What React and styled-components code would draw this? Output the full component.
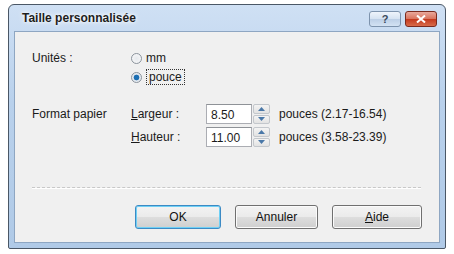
import React from "react";
import styled, { createGlobalStyle } from "styled-components";

const Global = createGlobalStyle`
  html, body { margin: 0; padding: 0; background: #ffffff; }
  body { font-family: "Liberation Sans", Arial, sans-serif; }
`;

const Window = styled.div`
  margin: 4px 0 0 8px;
  width: 438px;
  height: 245px;
  box-sizing: border-box;
  border: 1px solid #4a5766;
  border-radius: 6px 6px 2px 2px;
  background: linear-gradient(180deg, #cfe0f4 0%, #b9d1ec 40%, #b0cae7 100%);
  display: flex;
  flex-direction: column;
  padding: 0 5px 5px 5px;
`;

const TitleBar = styled.div`
  height: 26px;
  display: flex;
  align-items: center;
  justify-content: space-between;
  padding: 0 3px 0 8px;
`;

const Title = styled.div`
  font-size: 12px;
  font-weight: bold;
  color: #1e1e1e;
  text-shadow: 0 0 6px #ffffff, 0 0 3px #ffffff;
`;

const Caption = styled.div`
  display: flex;
  gap: 4px;
  margin-top: 2px;
`;

const CapButton = styled.div`
  width: 32px;
  height: 16px;
  box-sizing: border-box;
  border: 1px solid ${(p) => (p.$close ? "#7a2a1e" : "#7d93ad")};
  border-radius: 3px;
  background: ${(p) =>
    p.$close
      ? "linear-gradient(180deg, #e9a99c 0%, #d9755f 48%, #c43a1e 52%, #d86b4a 100%)"
      : "linear-gradient(180deg, #eef4fb 0%, #d6e3f2 48%, #bccfe6 52%, #d3e2f3 100%)"};
  display: flex;
  align-items: center;
  justify-content: center;
  color: ${(p) => (p.$close ? "#ffffff" : "#3a4a5c")};
  font-size: 11px;
  font-weight: bold;
`;

const Client = styled.div`
  flex: 1;
  background: #f0f0f0;
  border: 1px solid #8ea6c2;
  padding: 15px 17px 0 17px;
  font-size: 12px;
  color: #1a1a1a;
  display: flex;
  flex-direction: column;
`;

const Row = styled.div`
  display: grid;
  grid-template-columns: 99px 1fr;
  align-items: start;
  margin-top: ${(p) => p.$mt || 0}px;
`;

const Label = styled.div`
  line-height: 18px;
  padding-top: ${(p) => p.$pt || 0}px;
`;

const Radios = styled.div`
  display: flex;
  flex-direction: column;
  gap: 1px;
  margin-top: 2px;
`;

const RadioRow = styled.div`
  display: flex;
  align-items: center;
  gap: 4px;
  height: 18px;
`;

const RadioDot = styled.span`
  width: 11px;
  height: 11px;
  border-radius: 50%;
  box-sizing: border-box;
  border: 1px solid #8b939c;
  background: radial-gradient(circle at 50% 50%, ${(p) =>
    p.$on ? "#1c6fb3 0, #1c6fb3 2.5px, #dfe6ee 3.2px, #f6f8fa 100%" : "#e6e9ed 0, #fafafa 100%"});
`;

const Focus = styled.span`
  border: 1px dotted #333;
  padding: 0 2px;
  line-height: 14px;
`;

const Fields = styled.div`
  display: grid;
  grid-template-columns: 75px auto auto 1fr;
  row-gap: 3px;
  align-items: center;
`;

const Underline = styled.span`
  text-decoration: underline;
`;

const Input = styled.div`
  width: 46px;
  height: 20px;
  box-sizing: border-box;
  border: 1px solid #abadb3;
  border-top-color: #8e9297;
  background: #ffffff;
  padding: 3px 0 0 4px;
  font-size: 12px;
`;

const Spin = styled.div`
  width: 17px;
  height: 20px;
  margin-left: 1px;
  display: flex;
  flex-direction: column;
  gap: 1px;
`;

const SpinHalf = styled.div`
  flex: 1;
  box-sizing: border-box;
  border: 1px solid #c3c7cc;
  border-radius: 2px;
  background: linear-gradient(180deg, #f4f4f4, #e2e2e2);
  display: flex;
  align-items: center;
  justify-content: center;
`;

const Range = styled.div`
  padding-left: 9px;
`;

const Separator = styled.div`
  margin: 40px 1px 0 0;
  border-top: 1px dashed #c8c8c8;
  border-bottom: 1px solid #ffffff;
`;

const ButtonBar = styled.div`
  display: flex;
  justify-content: flex-end;
  gap: 14px;
  margin-top: 16px;
`;

const Button = styled.div`
  width: ${(p) => p.$w || 86}px;
  height: 24px;
  box-sizing: border-box;
  border: 1px solid ${(p) => (p.$default ? "#3c8ac4" : "#707070")};
  box-shadow: ${(p) => (p.$default ? "inset 0 0 0 1px #6fd0f5" : "inset 0 0 0 1px #fbfbfb")};
  border-radius: 3px;
  background: linear-gradient(180deg, #f3f3f3 0%, #ebebeb 48%, #dddddd 52%, #cfcfcf 100%);
  display: flex;
  align-items: center;
  justify-content: center;
  font-size: 12px;
  color: #111;
`;

const Arrow = ({ up }) => (
  <svg width="7" height="4" viewBox="0 0 7 4">
    <path d={up ? "M0 4 L3.5 0 L7 4 Z" : "M0 0 L3.5 4 L7 0 Z"} fill="#4a78a8" />
  </svg>
);

const SpinBox = ({ value }) => (
  <>
    <Input>{value}</Input>
    <Spin>
      <SpinHalf><Arrow up /></SpinHalf>
      <SpinHalf><Arrow /></SpinHalf>
    </Spin>
  </>
);

export default function App() {
  return (
    <>
      <Global />
      <Window>
        <TitleBar>
          <Title>Taille personnalisée</Title>
          <Caption>
            <CapButton>?</CapButton>
            <CapButton $close>
              <svg width="10" height="8" viewBox="0 0 10 8">
                <path d="M1 0.5 L9 7.5 M9 0.5 L1 7.5" stroke="#ffffff" strokeWidth="2" />
              </svg>
            </CapButton>
          </Caption>
        </TitleBar>
        <Client>
          <Row>
            <Label $pt={2}>Unités :</Label>
            <Radios>
              <RadioRow>
                <RadioDot />
                <span>mm</span>
              </RadioRow>
              <RadioRow>
                <RadioDot $on />
                <Focus>pouce</Focus>
              </RadioRow>
            </Radios>
          </Row>
          <Row $mt={18}>
            <Label $pt={1}>Format papier</Label>
            <Fields>
              <span><Underline>L</Underline>argeur :</span>
              <SpinBox value="8.50" />
              <Range>pouces (2.17-16.54)</Range>
              <span><Underline>H</Underline>auteur :</span>
              <SpinBox value="11.00" />
              <Range>pouces (3.58-23.39)</Range>
            </Fields>
          </Row>
          <Separator />
          <ButtonBar>
            <Button $default $w={86}>OK</Button>
            <Button $w={83}>Annuler</Button>
            <Button $w={90}><span><Underline>A</Underline>ide</span></Button>
          </ButtonBar>
        </Client>
      </Window>
    </>
  );
}
